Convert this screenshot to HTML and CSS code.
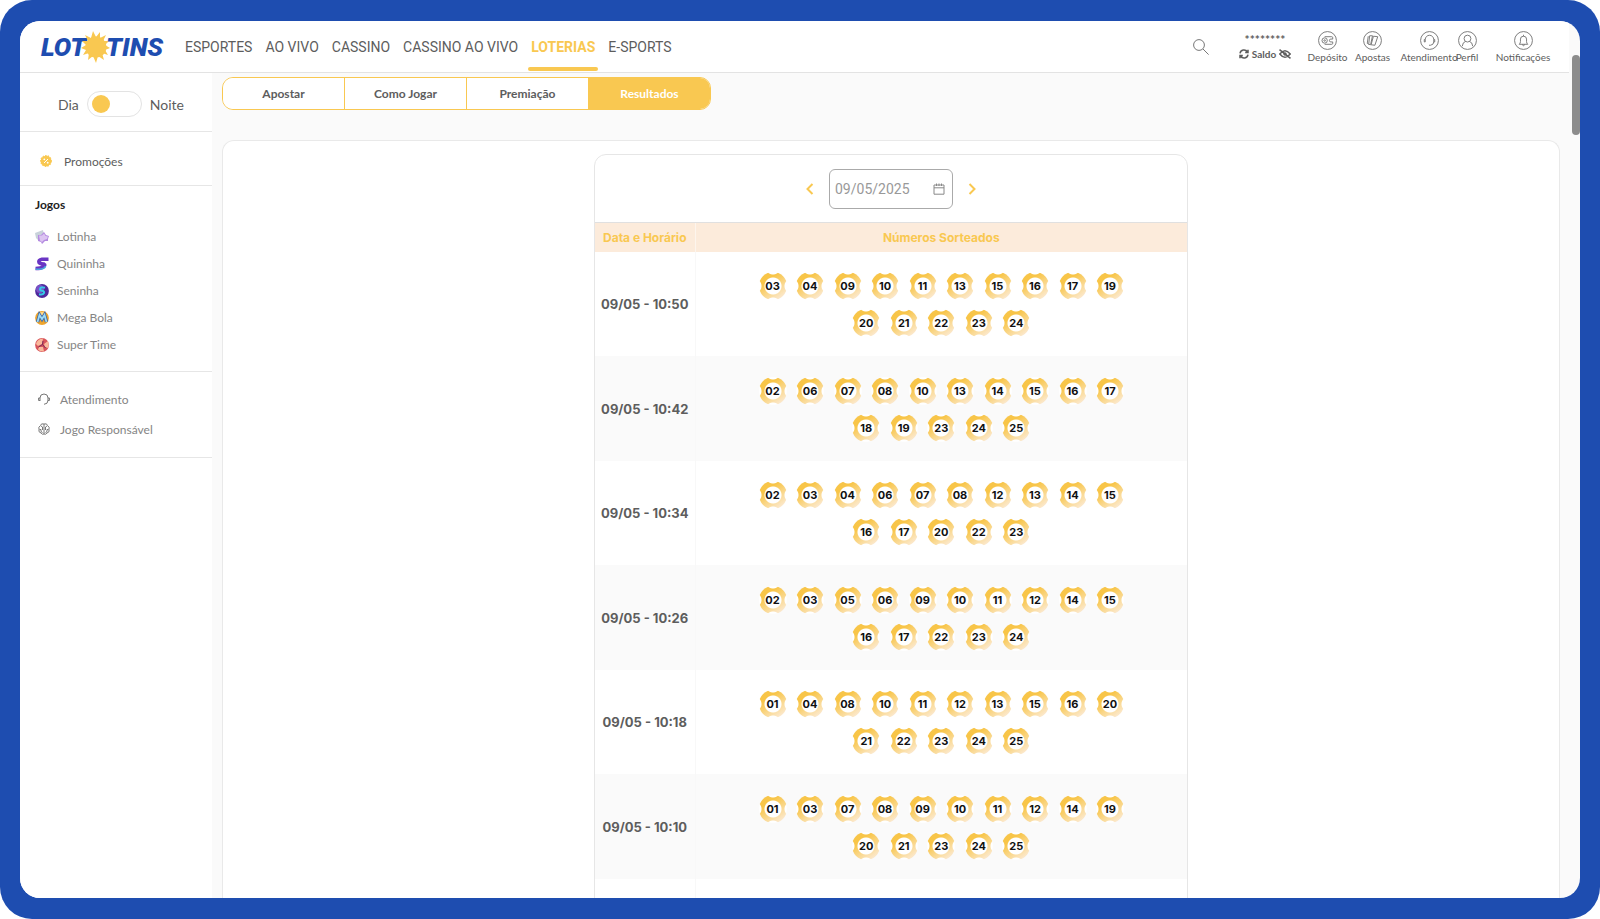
FILE: index.html
```html
<!DOCTYPE html>
<html lang="pt-BR">
<head>
  <meta charset="UTF-8">
  <meta name="viewport" content="width=device-width, initial-scale=1.0">
  <title>Lototins - Resultados</title>
  <link rel="stylesheet" href="styles.css">
</head>
<body>

  <div class="frame">
    <div class="window">
      <header class="topbar">
        <a href="#" class="logo">
          <span>LOT</span>
          <svg class="sun" viewBox="0 0 32 32">
            <path fill="#f9c851" d="M13 0l3 6 4-5 0 6 6-3-3 6 6 0-4 4 5 3-5 2 3 5-6-2 2 7-6-4-2 7-3-7-5 4 1-7-6 2 3-5-5-2 5-3-4-4 6 0-3-6 6 3z"/>
            <circle cx="16" cy="16" r="10.500" fill="#f9c851"/>
          </svg>
          <span>TINS</span>
        </a>
        <nav class="menu">
          <a href="#">ESPORTES</a>
          <a href="#">AO VIVO</a>
          <a href="#">CASSINO</a>
          <a href="#">CASSINO AO VIVO</a>
          <a href="#" class="active">LOTERIAS</a>
          <a href="#">E-SPORTS</a>
        </nav>
        <button class="search" aria-label="Buscar">
          <svg viewBox="0 0 16 16"><circle cx="6" cy="6" r="5.400"/><path d="M10 10l5.600 5.600"/></svg>
        </button>
        <div class="balance">
          <span class="stars">********</span>
          <button class="saldo">
            <svg viewBox="0 0 10 10"><path d="M1 4.400A4 4 0 0 1 8.400 3M9 .8v2.800H6.200M9 5.600A4 4 0 0 1 1.600 7M1 9.200V6.400h2.800"/></svg>
            Saldo
            <svg class="eye" viewBox="0 0 12 10"><path d="M.8 5Q6-1.600 11.200 5 6 11.600 .8 5zM.5 .6l11 8.800"/><circle cx="6" cy="5" r="1"/></svg>
          </button>
        </div>
        <div class="actions">
          <a href="#"><svg viewBox="0 0 20 20"><circle cx="10" cy="10" r="9.400"/><path d="M7 6h7.500a1 1 0 0 1 1 1v1.500h-2a1.500 1.500 0 0 0 0 3h2V13a1 1 0 0 1-1 1H7"/><circle cx="7" cy="10" r="2.800"/><circle cx="7" cy="10" r=".8"/></svg>Depósito</a>
          <a href="#"><svg viewBox="0 0 20 20"><circle cx="10" cy="10" r="9.400"/><path d="M5.500 5.500l-1 7.500 1.500 1M7 5l3 0-2 9.500-2-.5zM11 5.500l4.500.5-3 9-4-.5z"/></svg>Apostas</a>
          <a href="#"><svg viewBox="0 0 20 20"><circle cx="10" cy="10" r="9.400"/><path d="M5.500 11.500V9a4.500 4.500 0 0 1 9 0v2.500M5.500 9H4.500v2.500h1M14.500 9h1v2.500h-1q0 3-3.500 3.500h-1.500"/></svg>Atendimento</a>
          <a href="#"><svg viewBox="0 0 20 20"><circle cx="10" cy="10" r="9.400"/><circle cx="10" cy="8" r="3.600"/><path d="M4.500 16q.5-4.500 3.500-5M15.500 16q-.5-4.500-3.500-5"/></svg>Perfil</a>
          <a href="#"><svg viewBox="0 0 20 20"><circle cx="10" cy="10" r="9.400"/><path d="M5.500 14h9q-1.300-1-1.300-3V8.500q0-3-3.200-3t-3.200 3V11q0 2-1.300 3zM10 4v1.500M9 14q0 1.500 1 1.500t1-1.500"/></svg>Notificações</a>
        </div>
      </header>

      <div class="layout">
        <aside class="sidebar">
          <div class="theme">
            <span>Dia</span>
            <input type="checkbox" class="switch" aria-label="Modo noite">
            <span>Noite</span>
          </div>
          <div class="promo">
            <a href="#">
              <svg viewBox="0 0 12 12"><circle cx="6" cy="6" r="5.300" fill="#f9c851" stroke="#f9c851" stroke-width="1.200" stroke-dasharray="1.600 1"/><path d="M4 8l4-4" stroke="#fff"/><circle cx="4.300" cy="4.300" r=".9" fill="#fff"/><circle cx="7.700" cy="7.700" r=".9" fill="#fff"/></svg>
              Promoções
            </a>
          </div>
          <div class="games">
            <h2>Jogos</h2>
            <a href="#"><svg viewBox="0 0 14 14"><path fill="#c8d2da" d="M0 3l8-3 1 5-6 5-2-2z"/><path fill="#b48be0" d="M3 5l3 0 3-3 2 3 3 1-1 3 0 2-3 0-3 3-1-2-3-1 0-3z"/><path fill="#dcc4f2" d="M4 5.500l3 0 2-2 1.500 2.500 2.500.5-1 2.500-3 1-2 2-2-1.500z"/></svg>Lotinha</a>
            <a href="#"><svg viewBox="0 0 14 14"><path fill="none" stroke="#6a35c4" stroke-width="3.600" d="M13.500 2.200H7Q3 3 4 5.500q1 1.500 5 1.500 2 1-1 3-2 1.500-7.500 1.500"/><path fill="none" stroke="#4aa5dc" stroke-width="1.600" d="M.5 12q9 1 10-3"/></svg>Quininha</a>
            <a href="#"><svg viewBox="0 0 14 14"><circle cx="7" cy="7" r="6.900" fill="#4f289c"/><circle cx="5" cy="5" r="4" fill="#7851c7"/><path fill="none" stroke="#35c9e6" stroke-width="2" d="M10 3.800Q5 2.500 5 5.200q0 1.200 2.300 1.600Q9.600 7.400 9 9q-1 2-5 1.200"/></svg>Seninha</a>
            <a href="#"><svg viewBox="0 0 14 14"><circle cx="7" cy="7" r="6.900" fill="#efa52c"/><circle cx="7" cy="4" r="3" fill="#ffd98a"/><path fill="none" stroke="#3a63a8" stroke-width="3.400" d="M2.500 11l2-7L7 8l2.500-4 2 7"/><path fill="none" stroke="#9ddcf5" stroke-width="1.800" d="M2.500 11l2-7L7 8l2.500-4 2 7"/></svg>Mega Bola</a>
            <a href="#"><svg viewBox="0 0 14 14"><circle cx="7" cy="7" r="6.900" fill="#d8545a"/><path fill="#f9b99c" d="M1 6q1-5 7-5.500L7 6 3 8zM9 6l4-3q1.500 4 0 7l-3-1zM4 9l4 0 1 4.500q-4 .5-6-2z"/><path fill="none" stroke="#7b2b58" d="M3.500 9l4-2.500L10.500 10M7.500 6.500L8 3"/></svg>Super Time</a>
          </div>
          <div class="help">
            <a href="#"><svg viewBox="0 0 12 12"><path d="M2 8V5a4 4 0 0 1 8 0v3M2 5H.6v2.500H2M10 5h1.400v2.500H10Q10 11 6 11.300"/></svg>Atendimento</a>
            <a href="#"><svg viewBox="0 0 12 12"><path d="M6 1v10M6 1Q3 0 2.500 2.500 0 4 1 6.500 0 9 3 10q1.500 2 3 1M6 1q3-1 3.500 1.500Q12 4 11 6.500q1 2.500-2 3.500-1.500 2-3 1M3 3l1.500 1v3M9 3L7.500 4v3M1.500 6.500H3v2l1.500 1M10.500 6.500H9v2l-1.500 1"/></svg>Jogo Responsável</a>
          </div>
        </aside>

        <main class="content">
          <div class="tabs">
            <button>Apostar</button>
            <button>Como Jogar</button>
            <button>Premiação</button>
            <button class="active">Resultados</button>
          </div>

          <section class="panel">
            <div class="results">
              <div class="datebar">
                <button aria-label="Dia anterior"><svg viewBox="0 0 8 12"><path d="M6.500 1L1.500 6l5 5"/></svg></button>
                <div class="datefield">
                  <input type="text" value="09/05/2025" aria-label="Data">
                  <svg viewBox="0 0 12 12"><path d="M1 2h10v9.200H1zM1 4.800h10M3.500 .5V3M6 .5V3M8.500 .5V3"/></svg>
                </div>
                <button aria-label="Próximo dia"><svg viewBox="0 0 8 12"><path d="M1.500 1l5 5-5 5"/></svg></button>
              </div>
              <table>
                <thead>
                  <tr><th class="when">Data e Horário</th><th>Números Sorteados</th></tr>
                </thead>
                <tbody id="draws"></tbody>
              </table>
            </div>
          </section>
        </main>
      </div>

      <div class="scrollbar"><div class="thumb"></div></div>
    </div>
  </div>

  <script>
    const draws = [
      ["09/05 - 10:50", "03 04 09 10 11 13 15 16 17 19 20 21 22 23 24"],
      ["09/05 - 10:42", "02 06 07 08 10 13 14 15 16 17 18 19 23 24 25"],
      ["09/05 - 10:34", "02 03 04 06 07 08 12 13 14 15 16 17 20 22 23"],
      ["09/05 - 10:26", "02 03 05 06 09 10 11 12 14 15 16 17 22 23 24"],
      ["09/05 - 10:18", "01 04 08 10 11 12 13 15 16 20 21 22 23 24 25"],
      ["09/05 - 10:10", "01 03 07 08 09 10 11 12 14 19 20 21 23 24 25"],
      ["", ""]
    ];

    const tbody = document.getElementById("draws");
    draws.forEach(([when, numbers]) => {
      const balls = numbers.split(" ").filter(Boolean)
        .map(n => `<li><span>${n}</span></li>`).join("");
      tbody.innerHTML += `<tr><td>${when}</td><td><ul class="balls">${balls}</ul></td></tr>`;
    });
  </script>

</body>
</html>
```
FILE: styles.css
```css
* {
  box-sizing: border-box;
}

body {
  margin: 0;
  background: white;
  font-family: Lato, "Open Sans", sans-serif;
  color: #5d5d5d;
}

a {
  color: inherit;
  text-decoration: none;
}

button {
  padding: 0;
  border: none;
  background: none;
  color: inherit;
  font-family: inherit;
  cursor: pointer;
}

svg {
  flex: none;
  fill: none;
}

.frame {
  height: 100vh;
  padding: 21px 20px;
  background: #1e4db0;
  border-radius: 32px;
}

.window {
  position: relative;
  display: flex;
  flex-direction: column;
  height: 100%;
  padding-right: 11px;
  background: #fafafa;
  border-radius: 20px;
  overflow: hidden;
}

/* Topo */
.topbar {
  display: flex;
  align-items: center;
  flex: none;
  height: 52px;
  padding: 0 18px 0 21px;
  background: white;
  border-bottom: 1px solid #e3e3e3;
}

.logo {
  display: flex;
  align-items: center;
  width: 124px;
  margin-right: 20px;
  font-family: Roboto, sans-serif;
  font-size: 26px;
  font-weight: 900;
  font-style: italic;
  color: #1e4db0;
}

.sun {
  width: 32px;
  height: 32px;
  margin: 0 -6px;
}

.menu {
  display: flex;
  gap: 13px;
  font-family: Roboto, sans-serif;
  font-size: 14px;
}

.menu a {
  position: relative;
  line-height: 50px;
}

.menu .active {
  color: #f9c851;
  font-weight: bold;
}

.menu .active::after {
  content: "";
  position: absolute;
  left: -3px;
  right: -3px;
  bottom: 1px;
  height: 4px;
  border-radius: 2px;
  background: #f9c851;
}

.search {
  margin-left: auto;
  margin-right: 28px;
}

.search svg {
  display: block;
  width: 16px;
  height: 16px;
  stroke: #777;
}

.balance {
  width: 56px;
  margin-right: 12px;
  text-align: center;
}

.stars {
  display: block;
  height: 15px;
  font-size: 12px;
  line-height: 20px;
  font-weight: bold;
}

.saldo {
  display: flex;
  align-items: center;
  justify-content: center;
  gap: 3px;
  width: 100%;
  font-size: 10px;
  line-height: 18px;
  font-weight: bold;
}

.saldo svg {
  width: 10px;
  height: 10px;
  stroke: #5d5d5d;
  stroke-width: 1.5;
}

.saldo .eye {
  width: 12px;
}

.actions {
  display: flex;
  font-size: 10px;
  line-height: 12px;
}

.actions a {
  display: flex;
  flex-direction: column;
  align-items: center;
  gap: 1px;
  width: 45px;
}

.actions a:nth-child(3) {
  width: 68px;
}

.actions a:nth-child(4) {
  width: 8px;
}

.actions a:nth-child(5) {
  width: 56px;
  margin-left: 24px;
}

.actions svg {
  width: 19px;
  height: 19px;
  stroke: #777;
}

/* Menu lateral */
.layout {
  display: flex;
  flex: 1;
  min-height: 0;
}

.sidebar {
  flex: none;
  width: 192px;
  background: white;
}

.sidebar > div {
  border-bottom: 1px solid #e6e6e6;
}

.sidebar a {
  display: flex;
  align-items: center;
}

.theme {
  display: flex;
  align-items: center;
  justify-content: center;
  gap: 8px;
  height: 59px;
  padding: 4px 0 0 10px;
  font-size: 14px;
}

.switch {
  appearance: none;
  width: 55px;
  height: 26px;
  margin: 0;
  padding: 3px 4px;
  border: 1px solid #e3e3e3;
  border-radius: 13px;
  background: white;
}

.switch::before {
  content: "";
  display: block;
  width: 18px;
  height: 18px;
  border-radius: 50%;
  background: #f9c851;
}

.promo {
  height: 54px;
  padding: 5px 20px 0;
  font-size: 12px;
}

.promo a {
  height: 48px;
  gap: 12px;
}

.promo svg {
  width: 12px;
  height: 12px;
}

.games {
  padding: 7px 15px 13px;
  font-size: 12px;
  color: #858585;
}

.games h2 {
  margin: 0 0 6px;
  font-size: 12px;
  line-height: 24px;
  color: #222;
}

.games a {
  height: 27px;
  gap: 8px;
}

.games svg {
  width: 14px;
  height: 14px;
}

.help {
  padding: 12px 18px 13px;
  font-size: 12px;
  color: #858585;
}

.help a {
  height: 30px;
  gap: 10px;
}

.help svg {
  width: 12px;
  height: 12px;
  stroke: #777;
}

/* Conteúdo */
.content {
  display: flex;
  flex-direction: column;
  flex: 1;
  padding: 4px 9px 0 10px;
}

.tabs {
  display: flex;
  flex: none;
  width: 489px;
  height: 33px;
  border: 1px solid #f9c851;
  border-radius: 11px;
  overflow: hidden;
}

.tabs button {
  flex: 1;
  background: white;
  font-size: 12px;
  font-weight: bold;
}

.tabs button + button {
  border-left: 1px solid #f9c851;
}

.tabs .active {
  background: #f9c851;
  color: white;
}

.panel {
  flex: 1;
  min-height: 0;
  margin-top: 30px;
  padding-top: 13px;
  background: white;
  border: 1px solid #e9e9e9;
  border-bottom: none;
  border-radius: 12px 12px 0 0;
}

.results {
  width: 594px;
  margin: 0 auto;
  border: 1px solid #e6e6e6;
  border-radius: 12px;
}

.datebar {
  display: flex;
  align-items: center;
  justify-content: center;
  gap: 15px;
  height: 68px;
  border-bottom: 1px solid #e0e0e0;
}

.datebar button svg {
  display: block;
  width: 8px;
  height: 12px;
  stroke: #f9c851;
  stroke-width: 2;
}

.datefield {
  display: flex;
  align-items: center;
  width: 124px;
  height: 40px;
  padding: 0 7px 0 5px;
  border: 1px solid #aaa;
  border-radius: 6px;
}

.datefield input {
  flex: 1;
  width: 0;
  padding: 0;
  border: none;
  outline: none;
  font-family: Roboto, sans-serif;
  font-size: 14px;
  color: #999;
}

.datefield svg {
  width: 12px;
  height: 12px;
  stroke: #888;
}

table {
  width: 100%;
  border-collapse: collapse;
  font-family: Inter, sans-serif;
}

th {
  height: 29px;
  padding: 0;
  background: #fcebdb;
  font-size: 12px;
  color: #f9c851;
}

.when {
  width: 100px;
  border-right: 1px solid #fdf5ed;
}

td {
  height: 104px;
  padding: 0;
  font-size: 13px;
  font-weight: bold;
  text-align: center;
}

tbody tr:nth-child(even) td {
  height: 105px;
  background: #fafafa;
}

td:first-child {
  border-right: 1px solid #f8f8f8;
}

.balls {
  display: flex;
  flex-wrap: wrap;
  justify-content: center;
  width: 375px;
  margin: 0 auto;
  padding: 0;
  list-style: none;
}

.balls li {
  display: flex;
  justify-content: center;
  flex: 0 0 10%;
  height: 37px;
  padding-top: 5px;
}

.balls span {
  width: 28px;
  height: 28px;
  border-radius: 50%;
  font-size: 11px;
  line-height: 28px;
  color: #111;
  background:
    radial-gradient(circle at 50% 50%, white 8px, transparent 9px),
    radial-gradient(circle at 50% -5px, white 7px, transparent 8px),
    radial-gradient(circle at 50% 33px, white 7px, transparent 8px),
    radial-gradient(circle at -5px 50%, white 7px, transparent 8px),
    radial-gradient(circle at 33px 50%, white 7px, transparent 8px),
    linear-gradient(145deg, #f8c548 30%, #fcebd5 90%);
}

.scrollbar {
  position: absolute;
  top: 0;
  right: 0;
  width: 8px;
  height: 100%;
  padding-top: 34px;
}

.thumb {
  height: 80px;
  border-radius: 4px;
  background: #8c8c8c;
}
```
